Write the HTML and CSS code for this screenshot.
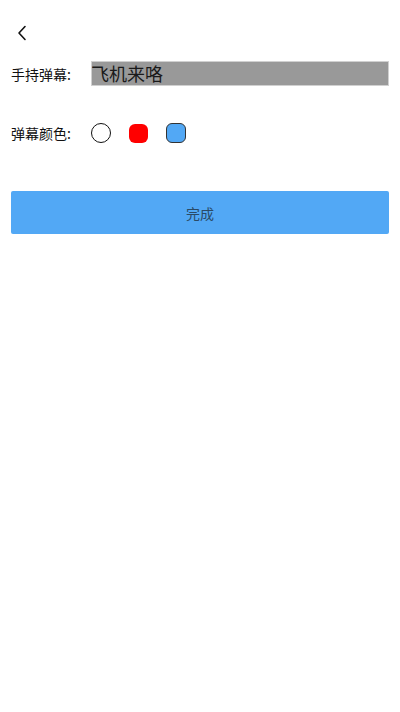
FILE: index.html
```html
<!DOCTYPE html>
<html lang="zh">
<head>
<meta charset="utf-8">
<link rel="stylesheet" href="styles.css">
</head>
<body>
<div class="page">
  <div class="topbar">
    <svg class="back" width="12" height="16" viewBox="0 0 12 16"><path d="M9 1.5 L3 8 L9 14.5" fill="none" stroke="#111" stroke-width="1.6" stroke-linecap="round" stroke-linejoin="round"/></svg>
  </div>
  <div class="row text-row">
    <span class="label">手持弹幕:</span>
    <div class="input">飞机来咯</div>
  </div>
  <div class="row color-row">
    <span class="label">弹幕颜色:</span>
    <div class="swatches">
      <span class="swatch white"></span>
      <span class="swatch red"></span>
      <span class="swatch blue"></span>
    </div>
  </div>
  <button class="done">完成</button>
</div>
</body>
</html>
```
FILE: styles.css
```css
* { box-sizing: border-box; }
html, body { margin: 0; padding: 0; background: #fff; }
body { font-family: "Noto Sans CJK SC", "Noto Sans", sans-serif; color: #111; }
.page { padding: 0 11px; display: flex; flex-direction: column; }
.topbar { height: 56px; display: flex; align-items: center; padding-left: 5px; padding-top: 10px; }
.back { display: block; }
.row { display: flex; align-items: center; }
.label { font-size: 14px; width: 80px; flex: none; line-height: 20px; }
.text-row { margin-top: 5px; }
.input { flex: 1; height: 25px; background: #999; border: 1px solid #d0d0d0; font-size: 18px; line-height: 22px; color: #1a1a1a; padding-left: 0; text-indent: -1px; white-space: nowrap; overflow: hidden; }
.color-row { margin-top: 37px; }
.swatches { display: flex; gap: 18px; align-items: center; }
.swatch { display: block; width: 20px; height: 20px; }
.white { border: 1.5px solid #111; border-radius: 50%; background: #fff; }
.red { background: #ff0000; border-radius: 6px; width: 19px; height: 19px; }
.blue { background: #52a8f5; border: 1px solid #333; border-radius: 6px; }
.done { margin-top: 48px; height: 43px; width: 100%; border: none; border-radius: 2px; background: #52a8f5; color: #2a4a66; font-family: "Noto Sans CJK SC", sans-serif; font-size: 14px; padding: 0; }
```
